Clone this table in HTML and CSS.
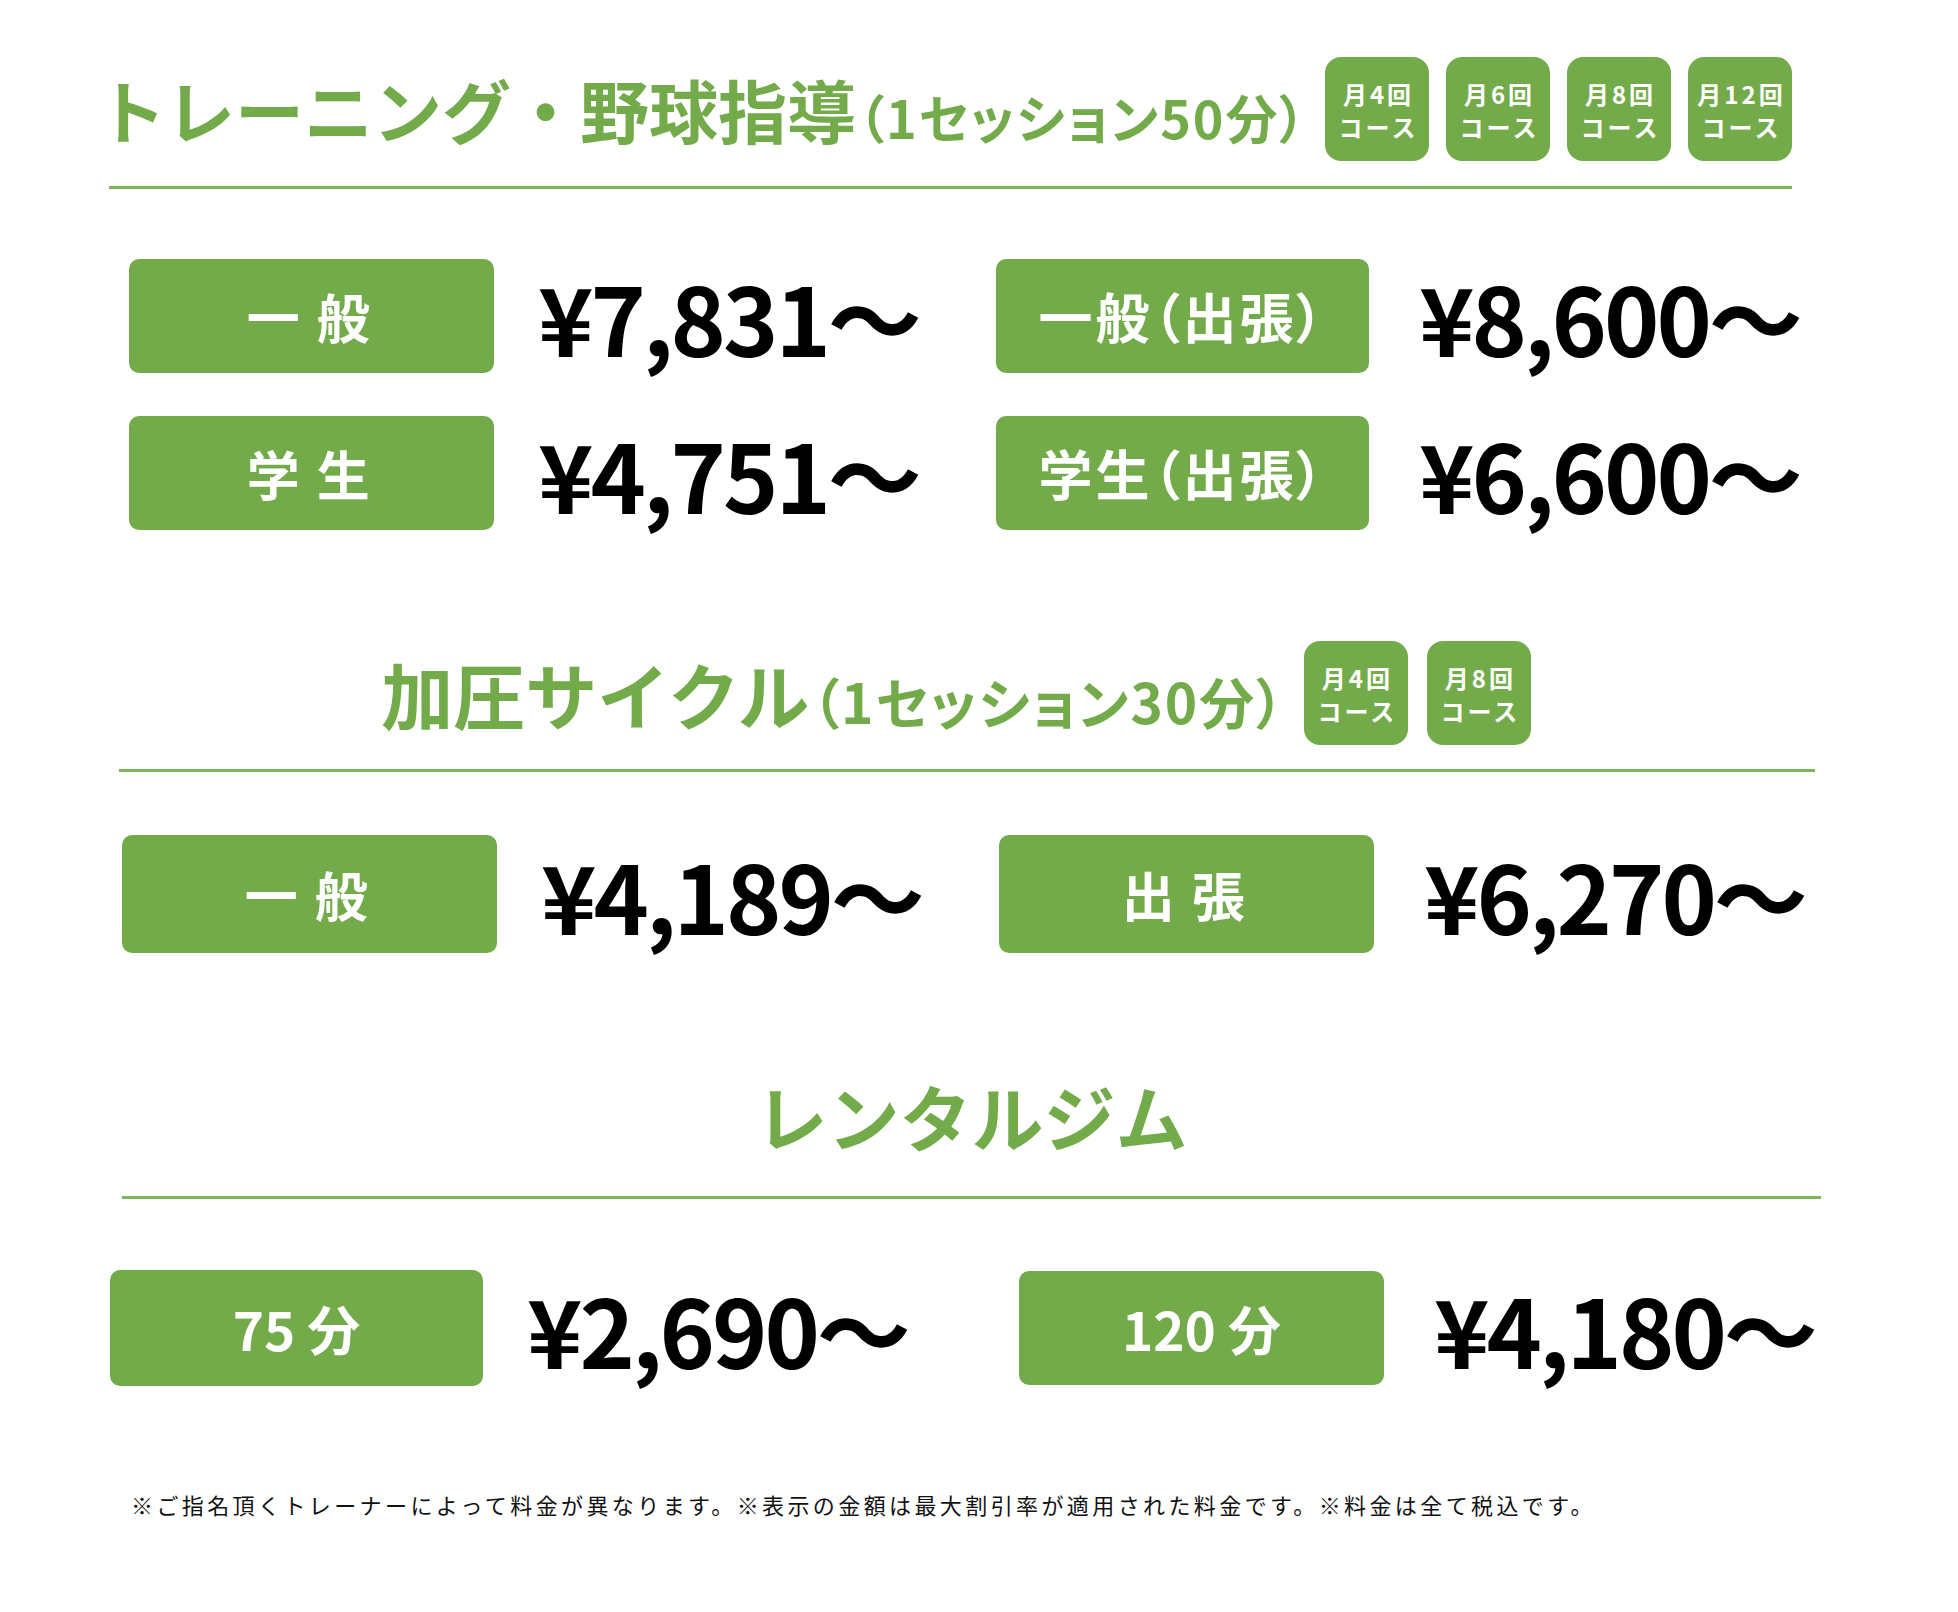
FILE: index.html
```html
<!DOCTYPE html>
<html lang="ja">
<head>
<meta charset="utf-8">
<title>料金</title>
<link rel="stylesheet" href="styles.css">
</head>
<body>
<main class="page">
  <section class="sec sec1">
    <header class="head head1">
      <h2 class="title"><span class="title-main">トレーニング・野球指導</span><span class="title-sub">（1セッション50分）</span></h2>
      <div class="badges">
        <div class="badge"><span>月4回</span><span>コース</span></div>
        <div class="badge"><span>月6回</span><span>コース</span></div>
        <div class="badge"><span>月8回</span><span>コース</span></div>
        <div class="badge"><span>月12回</span><span>コース</span></div>
      </div>
    </header>
    <div class="rows rows1">
      <div class="row">
        <div class="cell cell-left"><div class="label spaced">一般</div><div class="price">¥7,831～</div></div>
        <div class="cell cell-right"><div class="label wide">一般（出張）</div><div class="price">¥8,600～</div></div>
      </div>
      <div class="row">
        <div class="cell cell-left"><div class="label spaced">学生</div><div class="price">¥4,751～</div></div>
        <div class="cell cell-right"><div class="label wide">学生（出張）</div><div class="price">¥6,600～</div></div>
      </div>
    </div>
  </section>

  <section class="sec sec2">
    <header class="head head2">
      <h2 class="title"><span class="title-main">加圧サイクル</span><span class="title-sub">（1セッション30分）</span></h2>
      <div class="badges">
        <div class="badge"><span>月4回</span><span>コース</span></div>
        <div class="badge"><span>月8回</span><span>コース</span></div>
      </div>
    </header>
    <div class="rows rows2">
      <div class="row">
        <div class="cell cell-left"><div class="label spaced">一般</div><div class="price">¥4,189～</div></div>
        <div class="cell cell-right"><div class="label spaced">出張</div><div class="price">¥6,270～</div></div>
      </div>
    </div>
  </section>

  <section class="sec sec3">
    <header class="head head3">
      <h2 class="title"><span class="title-main">レンタルジム</span></h2>
    </header>
    <div class="rows rows3">
      <div class="row">
        <div class="cell cell-left"><div class="label">75 分</div><div class="price">¥2,690～</div></div>
        <div class="cell cell-right"><div class="label">120 分</div><div class="price">¥4,180～</div></div>
      </div>
    </div>
  </section>

  <p class="note">※ご指名頂くトレーナーによって料金が異なります。※表示の金額は最大割引率が適用された料金です。※料金は全て税込です。</p>
</main>
</body>
</html>
```

FILE: styles.css
```css
* { box-sizing: border-box; }
html, body { margin: 0; padding: 0; background: #ffffff; }
body {
  font-family: "Noto Sans CJK JP", "Noto Sans", sans-serif;
  color: #000;
}
.page {
  width: 1958px;
  padding-top: 57px;
}

.title {
  margin: 0;
  color: #73ab4a;
  font-weight: 700;
  display: flex;
  align-items: baseline;
  white-space: nowrap;
  line-height: 1;
}
.title-main { font-size: 69px; }
.title-sub {
  font-size: 52px;
  margin-left: 2px;
  font-feature-settings: "palt";
  letter-spacing: 2px;
}
.head1 .title { margin-left: -12px; }
.head2 .title-main { font-size: 72px; }
.head2 .title-sub { margin-left: 2px; font-size: 55px; }
.head3 .title-main { font-size: 72px; }

.head {
  display: flex;
  align-items: center;
  border-bottom: 3px solid #7fb45d;
}
.head1 {
  margin-left: 109px;
  width: 1683px;
  justify-content: space-between;
  padding-bottom: 25px;
}
.head2 {
  margin-left: 119px;
  width: 1696px;
  justify-content: center;
  padding-right: 22px;
  padding-bottom: 24px;
  gap: 18px;
}
.head3 {
  margin-left: 122px;
  width: 1699px;
  justify-content: center;
  padding-top: 1px;
  padding-bottom: 45px;
}

.badges { display: flex; gap: 19px; }
.head1 .badges { gap: 17px; }
.badge {
  width: 104px;
  height: 104px;
  border-radius: 16px;
  background: #73ab4a;
  color: #fff;
  font-weight: 700;
  font-size: 24px;
  line-height: 33px;
  letter-spacing: 3px;
  display: flex;
  flex-direction: column;
  align-items: center;
  justify-content: center;
  padding-top: 2px;
  padding-left: 3px;
}

.rows { display: flex; flex-direction: column; gap: 43px; }
.rows1 { margin-top: 70px; margin-left: 129px; }
.rows2 { margin-top: 63px; margin-left: 122px; }
.rows3 { margin-top: 71px; margin-left: 110px; }

.row { display: flex; }
.cell { display: flex; align-items: center; }
.rows1 .cell-left { width: 867px; }
.rows2 .cell-left { width: 877px; }
.rows3 .cell-left { width: 909px; }

.label {
  width: 365px;
  height: 114px;
  border-radius: 10px;
  background: #73ab4a;
  color: #fff;
  font-weight: 700;
  font-size: 53px;
  line-height: 1;
  display: flex;
  align-items: center;
  justify-content: center;
  font-feature-settings: "palt";
  white-space: nowrap;
}
.label.spaced { letter-spacing: 0.32em; padding-left: 0.2em; }
.label.wide { width: 373px; letter-spacing: 3px; font-size: 54px; }
.rows2 .label { width: 375px; height: 118px; }
.rows3 .cell-left .label { width: 373px; height: 116px; }

.price {
  margin-left: 44px;
  font-size: 94px;
  font-weight: 700;
  line-height: 1;
  letter-spacing: -3px;
  white-space: nowrap;
}
.cell-right .price { margin-left: 50px; }

.sec2 { margin-top: 111px; }
.sec3 { margin-top: 125px; }

.note {
  margin: 105px 0 0 131px;
  font-size: 22px;
  letter-spacing: 3.4px;
  line-height: 1.2;
  color: #111;
  white-space: nowrap;
}
```
